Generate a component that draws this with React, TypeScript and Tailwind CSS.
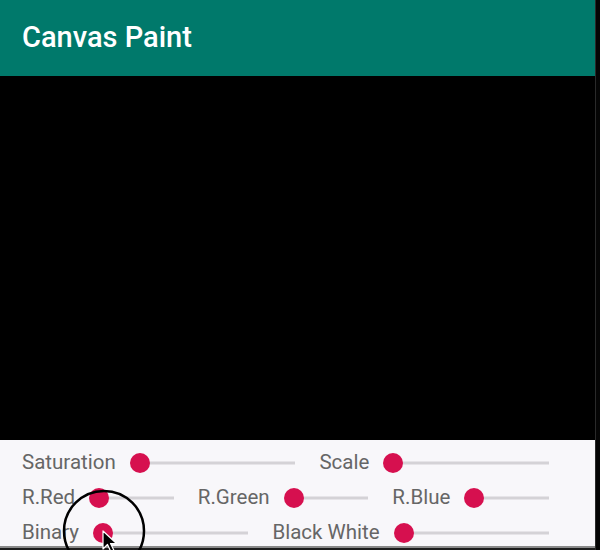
const ROWS: string[][] = [
  ["Saturation", "Scale"],
  ["R.Red", "R.Green", "R.Blue"],
  ["Binary", "Black White"],
];

function Slider({ last }: { last: boolean }) {
  return (
    <div className={`relative ml-[14px] h-full flex-1 basis-0 ${last ? "" : "mr-[24px]"}`}>
      <div className="absolute left-[10px] right-0 top-1/2 h-[3px] -translate-y-1/2 bg-[#d4d2d6]" />
      <div className="absolute left-0 top-1/2 h-[20px] w-[20px] -translate-y-1/2 rounded-full bg-[#d6104f]" />
    </div>
  );
}

export default function App() {
  return (
    <div className="flex h-[550px] w-[600px] bg-[#050505]" style={{ fontFamily: "Roboto, 'Liberation Sans', sans-serif" }}>
      <div className="relative flex w-[596px] flex-col border-r border-[#2a2a2a]">
        <header className="flex h-[76px] items-center bg-[#00796b] px-[22px] pb-[1px]">
          <h1 className="text-[29px] font-medium text-white">Canvas Paint</h1>
        </header>

        <div className="h-[364px] bg-black" />

        <div className="h-[106px] overflow-hidden bg-[#f8f7fa] pl-[22px] pr-[46px] pt-[5px]">
          {ROWS.map((row, r) => (
            <div key={r} className="flex h-[35px] items-center">
              {row.map((label, i) => (
                <div key={label} className="contents">
                  <span className="whitespace-nowrap text-[20.5px] leading-none text-[#666666]">{label}</span>
                  <Slider last={i === row.length - 1} />
                </div>
              ))}
            </div>
          ))}
        </div>
        <div className="h-[4px] border-t-2 border-[#8a8a8a] bg-[#1c1c1c]" />

        {/* touch indicator + pointer */}
        <svg className="pointer-events-none absolute left-[62px] top-[489px]" width="84" height="84" viewBox="0 0 84 84">
          <circle cx="42" cy="42" r="40" fill="none" stroke="#000" strokeWidth="2.5" />
        </svg>
        <svg className="pointer-events-none absolute left-[102px] top-[530px]" width="18" height="24" viewBox="0 0 18 24">
          <path d="M1 1 L1 19 L5.5 14.5 L9 22 L12 20.5 L8.5 13.5 L14.5 13.5 Z" fill="#000" stroke="#fff" strokeWidth="1.2" strokeLinejoin="round" />
        </svg>
      </div>
    </div>
  );
}
